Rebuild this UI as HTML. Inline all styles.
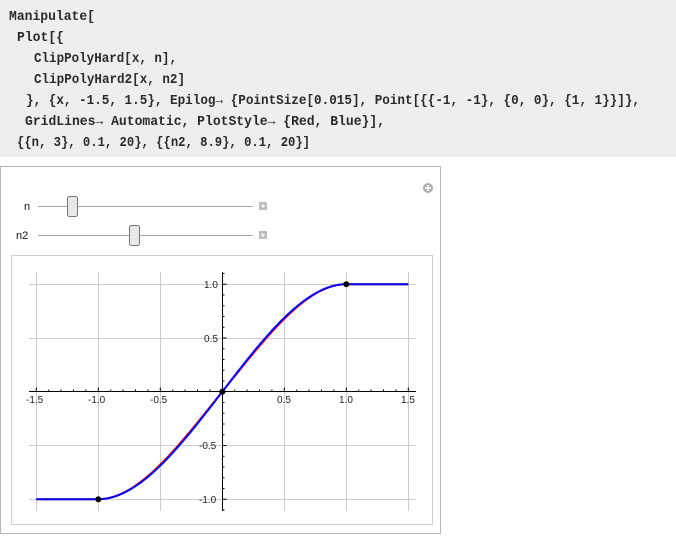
<!DOCTYPE html>
<html><head><meta charset="utf-8"><style>
html,body{margin:0;padding:0;background:#fff;width:676px;height:538px;overflow:hidden}
svg{display:block}
.c{font-family:"Liberation Mono","DejaVu Sans Mono",monospace;font-size:14px;font-weight:bold;fill:#2a2a2a}
.t{font-family:"Liberation Sans",sans-serif;font-size:10px;fill:#222}
.l{font-family:"Liberation Sans",sans-serif;font-size:11px;fill:#111}
</style></head><body>
<svg width="676" height="538" viewBox="0 0 676 538">
<rect x="0" y="0" width="676" height="157" fill="#eeeeee"/>
<text class="c" x="9" y="20" textLength="86" lengthAdjust="spacingAndGlyphs">Manipulate[</text>
<text class="c" x="17" y="41" textLength="47" lengthAdjust="spacingAndGlyphs">Plot[{</text>
<text class="c" x="34" y="62" textLength="143" lengthAdjust="spacingAndGlyphs">ClipPolyHard[x, n],</text>
<text class="c" x="34" y="83" textLength="151" lengthAdjust="spacingAndGlyphs">ClipPolyHard2[x, n2]</text>
<text class="c" x="26" y="104" textLength="614" lengthAdjust="spacingAndGlyphs">}, {x, -1.5, 1.5}, Epilog→ {PointSize[0.015], Point[{{-1, -1}, {0, 0}, {1, 1}}]},</text>
<text class="c" x="25" y="125" textLength="360" lengthAdjust="spacingAndGlyphs">GridLines→ Automatic, PlotStyle→ {Red, Blue}],</text>
<text class="c" x="17" y="146" textLength="293" lengthAdjust="spacingAndGlyphs">{{n, 3}, 0.1, 20}, {{n2, 8.9}, 0.1, 20}]</text>

<rect x="0.5" y="166.5" width="440" height="367" fill="#fff" stroke="#b5b5b5"/>
<circle cx="428" cy="188" r="5" fill="#b0b0b0"/>
<path d="M425 188h6M428 185v6" stroke="#fff" stroke-width="1.5"/>

<text class="l" x="24" y="210">n</text>
<line x1="38" y1="206.5" x2="253" y2="206.5" stroke="#a8a8a8"/>
<rect x="67.5" y="196.5" width="10" height="20" rx="2" fill="#e8e8e8" stroke="#777"/>
<rect x="259" y="202" width="8" height="8" fill="#bdbdbd"/>
<path d="M261 206h4M263 204v4" stroke="#fff"/>

<text class="l" x="16" y="239">n2</text>
<line x1="38" y1="235.5" x2="253" y2="235.5" stroke="#a8a8a8"/>
<rect x="129.5" y="225.5" width="10" height="20" rx="2" fill="#e8e8e8" stroke="#777"/>
<rect x="259" y="231" width="8" height="8" fill="#bdbdbd"/>
<path d="M261 235h4M263 233v4" stroke="#fff"/>

<rect x="11.5" y="255.5" width="421" height="269" fill="#fff" stroke="#cfcfcf"/>
<g stroke="#cccccc" stroke-width="1">
<path d="M36.5 272V511M98.5 272V511M160.5 272V511M284.5 272V511M346.5 272V511M408.5 272V511"/>
<path d="M29 284.5H416M29 338.5H416M29 445.5H416M29 499.5H416"/>
</g>
<g stroke="#000" stroke-width="1">
<path d="M29 391.5H416M222.5 272V511"/>
</g>
<g stroke="#000" stroke-width="1" id="ticks"></g>
<g class="t">
<text x="26" y="403">-1.5</text><text x="88" y="403">-1.0</text><text x="150" y="403">-0.5</text>
<text x="277" y="403">0.5</text><text x="339" y="403">1.0</text><text x="401" y="403">1.5</text>
<text x="204" y="288">1.0</text><text x="204" y="342">0.5</text>
<text x="199" y="449">-0.5</text><text x="199" y="503">-1.0</text>
</g>
<polyline id="r" fill="none" stroke="#ff0000" stroke-width="2" points=""/>
<polyline id="b" fill="none" stroke="#0000ff" stroke-width="2" points=""/>
<circle cx="98.3" cy="499.3" r="3" fill="#000"/>
<circle cx="222.3" cy="391.7" r="3" fill="#000"/>
<circle cx="346.3" cy="284.3" r="3" fill="#000"/>
</svg>
<script>
var ns="http://www.w3.org/2000/svg",g=document.getElementById("ticks"),d="";
for(var i=-15;i<=15;i++){var x=222.3+i*12.4;var L=(i%5==0)?4:2;d+="M"+x+" 391.5v"+(-L)+" ";}
for(var j=-11;j<=11;j++){var y=391.7-j*10.75;var L=(j%5==0)?4:2;d+="M222.5 "+y+"h"+L+" ";}
var p=document.createElementNS(ns,"path");p.setAttribute("d",d);g.appendChild(p);
function f(x){var a=Math.abs(x);if(a>=1)return Math.sign(x);return x*(1.5-0.5*x*x);}
function pts(sh){var s="";for(var x=-1.5;x<=1.5001;x+=0.01){var y=f(x);var X=222.3+x*124,Y=391.7-y*107.5;if(Math.abs(x)<1)Y+=sh*Math.sin(Math.PI*x)*(1-Math.abs(x));s+=X.toFixed(1)+","+Y.toFixed(1)+" ";}return s;}
document.getElementById("r").setAttribute("points",pts(2.2));
document.getElementById("b").setAttribute("points",pts(0));
</script>
</body></html>
